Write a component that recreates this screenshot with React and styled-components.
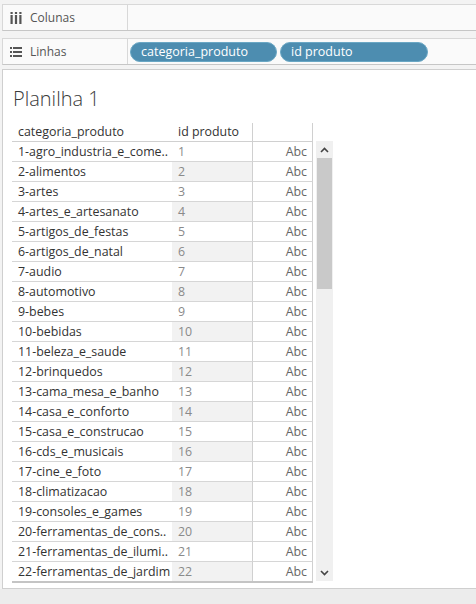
import React from "react";
import styled, { createGlobalStyle } from "styled-components";

const Global = createGlobalStyle`
  html, body { margin: 0; padding: 0; }
  body {
    width: 476px; height: 604px; overflow: hidden;
    background: #f3f3f3;
    font-family: "Open Sans", "Noto Sans", "Liberation Sans", sans-serif;
  }
`;

const Page = styled.div`
  width: 476px;
  height: 604px;
  display: flex;
  flex-direction: column;
  padding: 4px 0 0 2px;
  box-sizing: border-box;
  background: #f3f3f3;
`;

const Shelf = styled.div`
  display: flex;
  height: 27px;
  box-sizing: border-box;
  border: 1px solid #d8d8d8;
  border-right: none;
  border-bottom-color: #c6c6c6;
  background: #fafafa;
  margin-bottom: ${(p) => p.$gap}px;
`;

const ShelfLabel = styled.div`
  width: 125px;
  flex: none;
  display: flex;
  align-items: center;
  gap: 8px;
  padding-left: 7px;
  box-sizing: border-box;
  border-right: 1px solid #d8d8d8;
  font-size: 12px;
  color: #555;
`;

const ShelfBody = styled.div`
  flex: 1;
  display: flex;
  align-items: center;
  gap: 3px;
  padding-left: 2px;
`;

const Pill = styled.div`
  width: ${(p) => p.$w}px;
  height: 20px;
  box-sizing: border-box;
  border-radius: 10px;
  background: #4d8db0;
  border: 1px solid #6aa7c4;
  color: #fff;
  font-size: 12.5px;
  display: flex;
  align-items: center;
  padding-left: 10px;
`;

const Sheet = styled.div`
  margin-top: 4px;
  flex: none;
  height: 520px;
  box-sizing: border-box;
  border: 1px solid #cfcfcf;
  border-right: none;
  background: #fff;
  padding: 17px 0 0 9px;
`;

const Title = styled.div`
  font-size: 20px;
  font-weight: 300;
  color: #3a3a3a;
  height: 36px;
  line-height: 24px;
  padding-left: 1px;
`;

const TableWrap = styled.div`
  display: flex;
  align-items: flex-start;
  gap: 3px;
`;

const Table = styled.div`
  display: grid;
  grid-template-columns: 160px 80px 61px;
  font-size: 12.4px;
  border-bottom: 2px solid #c4c4c4;
`;

const HeadCell = styled.div`
  height: 18px;
  line-height: 18px;
  padding-left: ${(p) => (p.$blank ? 0 : 6)}px;
  color: #333;
  border-bottom: 1px solid #d0d0d0;
  border-left: ${(p) => (p.$blank ? "1px solid #d0d0d0" : "none")};
  border-right: ${(p) => (p.$blank ? "1px solid #d0d0d0" : "none")};
  white-space: nowrap;
  overflow: hidden;
`;

const Cell = styled.div`
  height: 19px;
  line-height: 19px;
  border-bottom: ${(p) => (p.$last ? "none" : "1px solid #d6d6d6")};
  white-space: nowrap;
  overflow: hidden;
  padding: 0 ${(p) => (p.$right ? 5 : 0)}px 0 ${(p) => (p.$right ? 0 : 6)}px;
  text-align: ${(p) => (p.$right ? "right" : "left")};
  color: ${(p) => p.$color};
  background: ${(p) => (p.$band ? "#f2f2f2" : "#fff")};
  border-left: ${(p) => (p.$right ? "1px solid #d0d0d0" : "none")};
  border-right: ${(p) => (p.$right ? "1px solid #d0d0d0" : "none")};
`;

const Scroll = styled.div`
  margin-top: 18px;
  width: 17px;
  height: 440px;
  background: #f0f0f0;
  display: flex;
  flex-direction: column;
  align-items: center;
`;

const Arrow = styled.div`
  height: 17px;
  width: 17px;
  display: flex;
  align-items: center;
  justify-content: center;
`;

const Thumb = styled.div`
  width: 15px;
  height: 131px;
  background: #c9c9c9;
`;

const Spacer = styled.div`
  flex: 1;
`;

const Bottom = styled.div`
  flex: 1;
  margin-left: -2px;
  background: #ececec;
`;

const ColsIcon = () => (
  <svg width="12" height="12" viewBox="0 0 12 12">
    <rect x="0.5" y="0" width="2.2" height="2" fill="#555" />
    <rect x="0.5" y="3" width="2.2" height="9" fill="#555" />
    <rect x="4.9" y="0" width="2.2" height="2" fill="#555" />
    <rect x="4.9" y="3" width="2.2" height="9" fill="#555" />
    <rect x="9.3" y="0" width="2.2" height="2" fill="#555" />
    <rect x="9.3" y="3" width="2.2" height="9" fill="#555" />
  </svg>
);

const RowsIcon = () => (
  <svg width="12" height="10" viewBox="0 0 12 10">
    <rect x="0" y="0" width="2" height="2" fill="#555" />
    <rect x="3" y="0" width="9" height="2" fill="#555" />
    <rect x="0" y="4" width="2" height="2" fill="#555" />
    <rect x="3" y="4" width="9" height="2" fill="#555" />
    <rect x="0" y="8" width="2" height="2" fill="#555" />
    <rect x="3" y="8" width="9" height="2" fill="#555" />
  </svg>
);

const Chevron = ({ up }) => (
  <svg width="9" height="6" viewBox="0 0 9 6">
    <path
      d={up ? "M1 5 L4.5 1.5 L8 5" : "M1 1 L4.5 4.5 L8 1"}
      fill="none"
      stroke="#444"
      strokeWidth="1.6"
    />
  </svg>
);

const cats = [
  "1-agro_industria_e_come..",
  "2-alimentos",
  "3-artes",
  "4-artes_e_artesanato",
  "5-artigos_de_festas",
  "6-artigos_de_natal",
  "7-audio",
  "8-automotivo",
  "9-bebes",
  "10-bebidas",
  "11-beleza_e_saude",
  "12-brinquedos",
  "13-cama_mesa_e_banho",
  "14-casa_e_conforto",
  "15-casa_e_construcao",
  "16-cds_e_musicais",
  "17-cine_e_foto",
  "18-climatizacao",
  "19-consoles_e_games",
  "20-ferramentas_de_cons..",
  "21-ferramentas_de_ilumi..",
  "22-ferramentas_de_jardim",
];

export default function App() {
  return (
    <>
      <Global />
      <Page>
        <Shelf $gap={7}>
          <ShelfLabel>
            <ColsIcon />
            Colunas
          </ShelfLabel>
          <ShelfBody />
        </Shelf>
        <Shelf $gap={0}>
          <ShelfLabel>
            <RowsIcon />
            Linhas
          </ShelfLabel>
          <ShelfBody>
            <Pill $w={147}>categoria_produto</Pill>
            <Pill $w={148}>id produto</Pill>
          </ShelfBody>
        </Shelf>
        <Sheet>
          <Title>Planilha 1</Title>
          <TableWrap>
            <Table>
              <HeadCell>categoria_produto</HeadCell>
              <HeadCell>id produto</HeadCell>
              <HeadCell $blank />
              {cats.map((c, i) => {
                const last = i === cats.length - 1;
                const band = i % 2 === 1;
                return (
                  <React.Fragment key={c}>
                    <Cell $color="#333" $last={last}>{c}</Cell>
                    <Cell $color="#8a8a8a" $band={band} $last={last}>{i + 1}</Cell>
                    <Cell $color="#666" $right $last={last}>Abc</Cell>
                  </React.Fragment>
                );
              })}
            </Table>
            <Scroll>
              <Arrow><Chevron up /></Arrow>
              <Thumb />
              <Spacer />
              <Arrow><Chevron /></Arrow>
            </Scroll>
          </TableWrap>
        </Sheet>
        <Bottom />
      </Page>
    </>
  );
}
